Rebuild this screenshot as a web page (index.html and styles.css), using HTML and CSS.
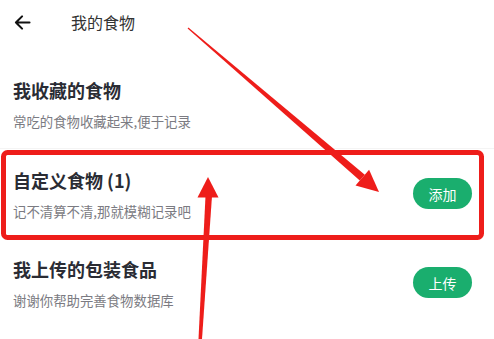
FILE: index.html
```html
<!DOCTYPE html>
<html lang="zh-CN">
<head>
  <meta charset="UTF-8" />
  <meta name="viewport" content="width=device-width, initial-scale=1.0" />
  <title>我的食物</title>
  <link rel="stylesheet" href="styles.css">
</head>
<body>
  <header class="topbar">
    <svg class="back" viewBox="0 0 24 24" width="21" height="21">
      <path d="M20 12H4.5M11.5 5l-7 7 7 7" fill="none" stroke="#111" stroke-width="2.4" stroke-linecap="round" stroke-linejoin="round"/>
    </svg>
    <span class="title">我的食物</span>
  </header>

  <div class="list">
    <div class="row first">
      <div class="text">
        <div class="row-title">我收藏的食物</div>
        <div class="row-sub">常吃的食物收藏起来,便于记录</div>
      </div>
    </div>

    <div class="row">
      <div class="text">
        <div class="row-title">自定义食物 (1)</div>
        <div class="row-sub">记不清算不清,那就模糊记录吧</div>
      </div>
      <button class="pill">添加</button>
    </div>

    <div class="row">
      <div class="text">
        <div class="row-title">我上传的包装食品</div>
        <div class="row-sub">谢谢你帮助完善食物数据库</div>
      </div>
      <button class="pill">上传</button>
    </div>
  </div>

  <!-- annotation layer drawn over the screenshot -->
  <svg class="marks" viewBox="0 0 494 339" width="494" height="339">
    <rect x="3.5" y="152.5" width="478" height="85" rx="4" fill="none" stroke="#ee1d1a" stroke-width="5"/>
    <polygon points="187.6,28.4 188.4,27.6 364.8,174.8 359.8,180.6" fill="#ee1d1a"/>
    <polygon points="379,192 355.5,185.6 369.1,169.8" fill="#ee1d1a"/>
    <polygon points="205.5,196 212,196 202,339 198.5,339" fill="#ee1d1a"/>
    <polygon points="208,177 197.5,197.5 218.5,197.5" fill="#ee1d1a"/>
  </svg>
</body>
</html>
```

FILE: styles.css
```css
:root {
  --green: #1aae6e;
  --title: #2a2c34;
  --sub: #7b7b82;
}
* { box-sizing: border-box; }
html, body {
  margin: 0;
  width: 494px;
  height: 339px;
  overflow: hidden;
  background: #fff;
}
body {
  position: relative;
  font-family: "Noto Sans CJK SC", "Noto Sans", sans-serif;
}
.topbar {
  height: 44px;
  display: flex;
  align-items: center;
  padding-left: 12px;
}
.back { display: block; }
.title {
  margin-left: 38px;
  font-size: 16px;
  color: #333;
}
.list { padding-top: 16px; }
.row {
  height: 89px;
  display: flex;
  align-items: center;
  padding: 0 22px 0 13px;
}
.row.first { border-bottom: 1px solid #f4f4f4; }
.text { flex: 1; }
.row-title {
  font-size: 18px;
  font-weight: bold;
  line-height: 24px;
  color: var(--title);
}
.row-sub {
  margin-top: 10px;
  font-size: 13.4px;
  line-height: 18px;
  color: var(--sub);
}
.pill {
  width: 59px;
  height: 31px;
  border: none;
  border-radius: 16px;
  background: var(--green);
  color: #fff;
  font-family: inherit;
  font-size: 14px;
  padding: 0;
}
.marks {
  position: absolute;
  left: 0;
  top: 0;
  pointer-events: none;
}
```
